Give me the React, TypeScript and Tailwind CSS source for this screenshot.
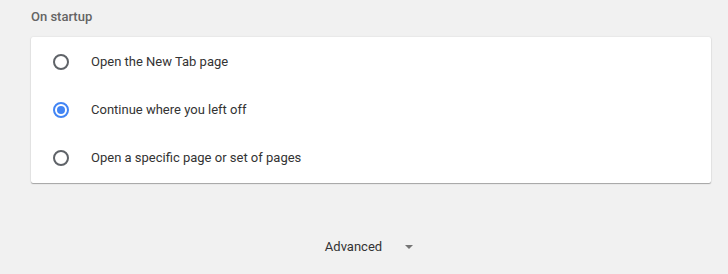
import React, { useState } from 'react';

const options = [
  { id: 'newtab', label: 'Open the New Tab page' },
  { id: 'continue', label: 'Continue where you left off' },
  { id: 'specific', label: 'Open a specific page or set of pages' },
];

const Radio = ({ checked }: { checked: boolean }) => (
  <span
    className={`flex h-4 w-4 shrink-0 items-center justify-center rounded-full border-2 ${
      checked ? 'border-[#4285f4]' : 'border-[#5f6368]'
    }`}
  >
    {checked && <span className="h-2 w-2 rounded-full bg-[#4285f4]" />}
  </span>
);

export default function App() {
  const [selected, setSelected] = useState('continue');

  return (
    <div
      className="h-[274px] w-[728px] bg-[#f1f1f1] text-[13px]"
      style={{ fontFamily: 'Roboto, "Liberation Sans", sans-serif' }}
    >
      <div className="pl-[31px] pr-[17px]">
        <h2 className="pt-[8px] pb-[12px] text-[13px] font-medium leading-[17px] text-[#646464]">
          On startup
        </h2>
        <div className="rounded-[2px] bg-white py-px shadow-[0_1px_1px_rgba(0,0,0,0.3),0_0_2px_rgba(0,0,0,0.12)]">
          {options.map((o) => (
            <label
              key={o.id}
              onClick={() => setSelected(o.id)}
              className="flex h-12 cursor-pointer items-center pl-[22px] text-[#333333]"
            >
              <Radio checked={selected === o.id} />
              <span className="pl-[22px]">{o.label}</span>
            </label>
          ))}
        </div>
        <div className="flex justify-center pt-[54px] pr-[4px]">
          <button className="flex items-center text-[13px] text-[#333333]">
            <span>Advanced</span>
            <svg className="ml-[23px]" width="8" height="4" viewBox="0 0 8 4">
              <path d="M0 0 L8 0 L4 4 Z" fill="#757575" />
            </svg>
          </button>
        </div>
      </div>
    </div>
  );
}
